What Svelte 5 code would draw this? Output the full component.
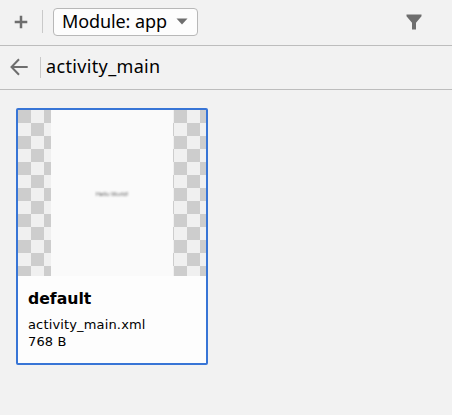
<script>
  const resource = { name: 'default', file: 'activity_main.xml', size: '768 B' };
</script>

<div class="panel">
  <header class="toolbar">
    <svg class="plus" width="14" height="14" viewBox="0 0 14 14" aria-label="Add">
      <path d="M7 .7V13.3M.7 7H13.3" stroke="#6e6e6e" stroke-width="2.5" fill="none" />
    </svg>
    <span class="divider"></span>
    <button class="module">
      <span>Module: app</span>
      <svg width="12" height="7" viewBox="0 0 12 7"><path d="M0.5 0.5H11.5L6 6.5Z" fill="#6e6e6e" /></svg>
    </button>
    <svg class="filter" width="16" height="16" viewBox="0 0 16 16" aria-label="Filter">
      <path d="M0.5 0.5H15.5V2.3L10 8.8V15.5H6V8.8L0.5 2.3Z" fill="#6e6e6e" />
    </svg>
  </header>

  <nav class="crumbs">
    <svg class="back" width="18" height="18" viewBox="0 0 18 18" aria-label="Back">
      <path d="M9 1.2L1.5 9L9 16.8M1.5 9H17.7" stroke="#6e6e6e" stroke-width="2" fill="none" />
    </svg>
    <span class="divider"></span>
    <span class="title">activity_main</span>
  </nav>

  <main>
    <article class="card">
      <div class="preview">
        <div class="screen"><span>Hello World!</span></div>
      </div>
      <div class="info">
        <h2>{resource.name}</h2>
        <p>{resource.file}</p>
        <p>{resource.size}</p>
      </div>
    </article>
  </main>
</div>

<style>
  :global(body) {
    background: #f2f2f2;
  }
  .panel {
    box-sizing: border-box;
    width: 452px;
    height: 415px;
    background: #f2f2f2;
    color: #000;
    overflow: hidden;
    font-family: 'DejaVu Sans', sans-serif;
  }
  .toolbar,
  .crumbs {
    box-sizing: border-box;
    display: flex;
    align-items: center;
    border-bottom: 1px solid #bdbdbd;
    font: 18px/24px 'Noto Sans', sans-serif;
  }
  .toolbar {
    height: 46px;
    padding: 0 30px 2px 14px;
  }
  .crumbs {
    height: 44px;
    padding: 0 0 1px 10px;
  }
  .title {
    padding-bottom: 2px;
    letter-spacing: 0.35px;
  }
  .divider {
    width: 1px;
    height: 23px;
    background: #c9c9c9;
  }
  .toolbar .divider {
    margin: 0 10px 0 14px;
  }
  .crumbs .divider {
    height: 21px;
    margin: 0 5px 0 12px;
  }
  .module {
    box-sizing: border-box;
    width: 145px;
    height: 28px;
    display: flex;
    align-items: center;
    justify-content: space-between;
    padding: 0 9px 0 8px;
    border: 1px solid #b8b8b8;
    border-radius: 4px;
    background: #fdfdfd;
    color: #000;
    font: inherit;
    white-space: nowrap;
  }
  .module span {
    letter-spacing: -0.1px;
    padding-bottom: 1px;
  }
  .filter {
    margin-left: auto;
  }
  svg {
    display: block;
    flex: none;
  }
  main {
    padding: 18px 16px;
  }
  .card {
    box-sizing: border-box;
    width: 192px;
    height: 257px;
    border: 2px solid #3875d6;
    border-radius: 2px;
    background: #fdfdfd;
  }
  .preview {
    height: 166px;
    display: flex;
    padding-left: 33px;
    background: repeating-conic-gradient(#f0f0f0 0 25%, #cdcdcd 0 50%) 0 0 / 26px 26px;
  }
  .screen {
    width: 122px;
    display: flex;
    align-items: center;
    justify-content: center;
    padding-top: 1px;
    box-sizing: border-box;
    background: #fafafa;
  }
  .screen span {
    font: 6px/8px Roboto, sans-serif;
    color: #666;
    filter: blur(1px);
  }
  .info {
    padding: 13px 10px;
  }
  h2 {
    margin: 0 0 7px;
    font-size: 15.7px;
    line-height: 20px;
  }
  p {
    margin: 0;
    font-size: 13px;
    line-height: 17px;
    letter-spacing: 0.15px;
  }
</style>
